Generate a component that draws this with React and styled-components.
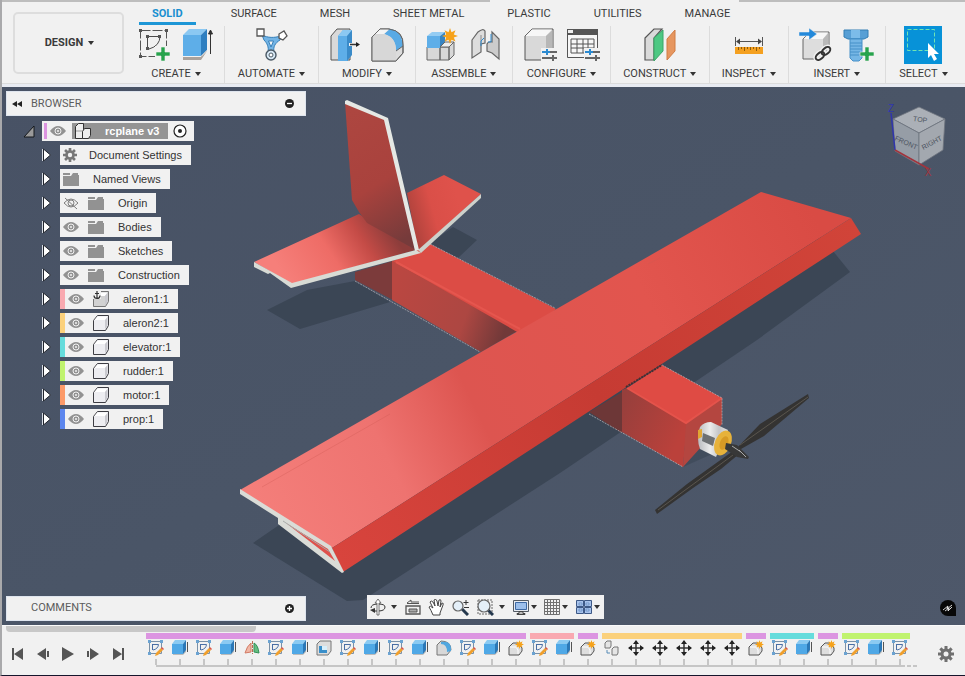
import React from "react";
import styled, { createGlobalStyle, css } from "styled-components";

const uiFont = `Roboto, "Liberation Sans", Arial, sans-serif`;
const treeFont = `"Liberation Sans", Arial, sans-serif`;

const GlobalStyle = createGlobalStyle`
  * { box-sizing: border-box; }
  html, body { margin: 0; background: #f1f1f1; }
  svg { display: block; flex: none; }
  button { margin: 0; padding: 0; border: 0; background: none; color: inherit; font: inherit; cursor: pointer; }
`;

/* ---------- Shell ---------- */

const Shell = styled.div`
  display: flex;
  flex-direction: column;
  min-height: 100vh;
  border-left: 2px solid #a9a9ab;
  border-bottom: 1px solid #15152c;
  background: #f1f1f1;
  color: #3a3a3a;
  font-family: ${uiFont};
  font-size: 11px;
  line-height: 14px;
`;

const DocumentStrip = styled.div`
  display: grid;
  grid-template-columns: 488fr 249fr 226fr;
  height: 2px;
  background: #bdbdbd;
`;

const ActiveDocument = styled.div`
  grid-column: 2;
  background: #f1f1f1;
`;

/* ---------- Toolbar ---------- */

const Toolbar = styled.header`
  display: flex;
  height: 85px;
  border-bottom: 3px solid #e8ebf2;
  box-shadow: inset 0 -1px 0 #dcdcdc;
`;

const WorkspaceButton = styled.button`
  display: flex;
  align-items: center;
  justify-content: center;
  gap: 5px;
  flex: none;
  width: 111px;
  height: 62px;
  margin: 10px 4px 0 11px;
  padding-left: 2px;
  border: 2px solid #dddddd;
  border-radius: 5px;
  font-weight: 700;
`;

const ToolArea = styled.div`
  display: flex;
  flex-direction: column;
  flex: 1;
  min-width: 0;
`;

const Tabs = styled.nav`
  display: flex;
  gap: 17px;
  height: 23px;
`;

const Tab = styled.button`
  height: 23px;
  padding: 0 13px;
  white-space: nowrap;
  ${(p) =>
    p.$active &&
    css`
      margin-left: 11px;
      margin-right: 5px;
      color: #1a8fd0;
      font-weight: 700;
      border-bottom: 3px solid #1d96d6;
      padding-top: 3px;
    `}
`;

const Groups = styled.div`
  display: flex;
  flex: 1;
  padding: 1px 4px 1px 0;
`;

const Group = styled.section`
  display: flex;
  flex-direction: column;
  align-items: center;
  justify-content: space-between;
  flex: ${(p) => p.$span} 1 0;
  border-right: 1px solid #dcdcdc;
  &:last-child { border-right: 0; }
`;

const GroupTools = styled.div`
  display: flex;
  align-items: center;
  justify-content: center;
  gap: 9px;
  height: 38px;
`;

const MenuButton = styled.button`
  display: flex;
  align-items: center;
  gap: 4px;
  height: 18px;
`;

const Caret = styled.span`
  border: 3px solid transparent;
  border-top: 4px solid #333333;
  border-bottom: 0;
`;

/* ---------- Viewport ---------- */

const Viewport = styled.main`
  position: relative;
  display: flex;
  flex-direction: column;
  flex: 1;
  overflow: hidden;
  background: #4b5567;
`;

const Scene = styled.svg`
  position: absolute;
  inset: 0;
  width: 100%;
  height: 100%;
`;

const Overlay = styled.div`
  position: relative;
  display: flex;
  flex: 1;
  justify-content: space-between;
  padding: 4px 14px 0 4px;
`;

const CubeHolder = styled.div`
  padding-top: 8px;
`;

const Panel = styled.div`
  display: flex;
  align-items: center;
  width: 300px;
  height: 25px;
  padding: 0 11px 0 4px;
  border: 1px solid #dfe5ee;
  background: #f1f1f1;
  color: #5c5c5c;
`;

const PanelTitle = styled.span`
  flex: 1;
  padding-left: ${(p) => (p.$indent ? 20 : 8)}px;
`;

const Tree = styled.ul`
  margin: 5px 0 0;
  padding: 0;
  list-style: none;
  font-family: ${treeFont};
`;

const TreeRow = styled.li`
  display: flex;
  align-items: center;
  height: 20px;
  margin-bottom: 4px;
  padding-left: ${(p) => (p.$root ? 16 : 36)}px;
  gap: ${(p) => (p.$root ? 7 : 9)}px;
`;

const Chip = styled.div`
  display: flex;
  align-items: center;
  gap: 9px;
  height: 20px;
  padding-right: ${(p) => (p.$root ? 7 : 9)}px;
  padding-left: ${(p) => (p.$color || p.$root ? 0 : 3)}px;
  background: #f1f1f1;
  color: #333333;
`;

const Stripe = styled.span`
  width: ${(p) => (p.$root ? 3 : 5)}px;
  height: ${(p) => (p.$root ? 16 : 20)}px;
  margin: 0 ${(p) => (p.$root ? -6 : -6)}px 0 ${(p) => (p.$root ? 2 : 0)}px;
  background: ${(p) => p.$color};
`;

const NodeName = styled.span`
  padding-left: ${(p) => (p.$tight ? 3 : 5)}px;
  white-space: nowrap;
`;

const RootName = styled.div`
  display: flex;
  align-items: center;
  gap: 14px;
  height: 16px;
  margin: 0 -4px 0 -3px;
  padding: 0 9px 0 3px;
  background: #949494;
  color: #ffffff;
  font-weight: 700;
`;

const Dock = styled.div`
  position: relative;
  display: flex;
  align-items: center;
  padding: 0 9px 4px 4px;
`;

const ViewTools = styled.div`
  display: flex;
  align-items: center;
  justify-content: space-between;
  width: 237px;
  height: 24px;
  margin: 0 auto 2px 61px;
  padding: 0 4px 0 3px;
  background: #f1f1f1;
`;

const ViewTool = styled.button`
  display: flex;
  align-items: center;
  gap: ${(p) => (p.$wide ? 5 : 2)}px;
`;

/* ---------- Timeline ---------- */

const Timeline = styled.footer`
  height: 50px;
  overflow: hidden;
  border-top: 1px solid #fafafa;
`;

const ScrollThumb = styled.div`
  width: 26%;
  height: 6px;
  margin-left: 4px;
  border-radius: 0 0 4px 4px;
  background: #c8c8c8;
`;

const TimelineBody = styled.div`
  display: flex;
  align-items: flex-start;
`;

const Playback = styled.div`
  display: flex;
  gap: 5px;
  flex: none;
  width: 144px;
  padding: 12px 0 0 6px;
`;

const FeatureGroups = styled.div`
  display: flex;
  gap: 4px;
`;

const FeatureGroup = styled.div`
  border-top: 6px solid ${(p) => p.$color};
  margin-top: 1px;
`;

const FeatureRow = styled.div`
  display: flex;
  gap: 4px;
  padding-top: 1px;
`;

const Feature = styled.button`
  display: flex;
  flex-direction: column;
  align-items: center;
  width: 20px;
  height: 25px;
  gap: 3px;
  &::after {
    content: "";
    width: 2px;
    height: 6px;
    background: #c6c6c6;
  }
`;

const Track = styled.div`
  height: 2px;
  margin: 0 ${(p) => (p.$last ? 5 : -4)}px 0 ${(p) => (p.$first ? 10 : 0)}px;
  background: #c6c6c6;
`;

const TrackEnd = styled.div`
  width: 10px;
  height: 2px;
  margin: 33px 0 0 -3px;
  background: repeating-linear-gradient(90deg, #c6c6c6 0 4px, transparent 4px 6px);
`;

const SettingsButton = styled.button`
  margin: 14px 11px 0 auto;
`;

/* ---------- Toolbar drawings ---------- */

const I = ({ children, w = 34, h = 36 }) => (
  <svg width={w} height={h} viewBox={`0 0 ${w} ${h}`} fill="none" aria-hidden="true">{children}</svg>
);

const Plus = ({ x, y }) => (
  <path transform={`translate(${x} ${y})`} d="M5 0h4v5h5v4h-5v5h-4v-5h-5v-4h5z" fill="#27a34c" stroke="#f1f1f1" strokeWidth=".6" />
);

const SketchIcon = () => (
  <I>
    <path d="M3.500 3.500h26v26h-26z" stroke="#555" strokeDasharray="10 2" />
    <path d="M10.500 9v12M10 9.500h13M23 9Q23 19 12 22" stroke="#4b4b4b" />
    <path d="M2 2h3v3H2zM28 2h3v3h-3zM2 28h3v3H2zM9 8h3v3H9zM21 8h3v3h-3zM9 20h3v3H9z" fill="#555" />
    <path d="M18 19h13v14H18z" fill="#f1f1f1" />
    <Plus x={19} y={20} />
  </I>
);

const ExtrudeIcon = () => (
  <I>
    <path d="M3 29l7-5h17l-6 9H3z" fill="#aaa29c" />
    <path d="M3 8h18v21H3z" fill="#5eaee8" />
    <path d="M3 8l6-6h18l-6 6z" fill="#8bc8f2" />
    <path d="M21 8l6-6v21l-6 6z" fill="#2f7fc0" />
    <path d="M3 29.500h18l6-6" stroke="#f2f2f2" />
    <path d="M30.500 5v22M28.500 7l2-4 2 4z" stroke="#333" fill="#222" />
  </I>
);

const AutomateIcon = () => (
  <I>
    <path d="M8 8c6 3 12 3 19 1l-1 4c-5 3-7 7-6 12h-6c1-5-1-9-4-12z" fill="#73b4e5" stroke="#347fb9" />
    <path d="M14.500 14h5L17 20z" fill="#f5f5f5" stroke="#347fb9" />
    <path d="M3 2h7v7H3zM25 7l5-3 3 5-4 4-4-2z" fill="#fff" stroke="#555" strokeWidth="1.300" />
    <circle cx="17" cy="28" r="5" fill="#d8e9f6" stroke="#4b5965" strokeWidth="1.400" />
    <circle cx="17" cy="28" r="2" fill="#fff" stroke="#4b5965" />
  </I>
);

const PressPullIcon = () => (
  <I>
    <path d="M3 9l6-7h13v31H3z" fill="#d9d9d9" stroke="#555" />
    <path d="M10 9l5-6h9l-4 6v25H10z" fill="#5eaee8" />
    <path d="M10 9l5-6h9l-4 6z" fill="#8bc8f2" />
    <path d="M19 9l5-6v25l-5 6z" fill="#3a8bc9" />
    <path d="M21 17.500h8" stroke="#f1f1f1" strokeWidth="3" />
    <path d="M22 17.500h8" stroke="#333" strokeWidth="1.500" />
    <path d="M28 15l4 2.500-4 2.500z" fill="#222" />
  </I>
);

const FilletIcon = () => (
  <I>
    <path d="M1 10l8-8h9q15 2 14 17v7l-7 8H1z" fill="#dcdcdc" stroke="#5b5b5b" />
    <path d="M13 7l6-5q12 2 13 17l-7 5Q25 10 13 7z" fill="#59aae5" />
    <path d="M1 10l3-3h9q12 3 12 17v10H1z" fill="#d7d7d7" />
    <path d="M1 10l8-8h9l-5 5H4z" fill="#f4f4f4" />
    <path d="M1 10l8-8h9q15 2 14 17v7l-7 8H1zM25 24l7-5" stroke="#666" />
  </I>
);

const Star = ({ x, y, s = 1 }) => (
  <path transform={`translate(${x} ${y}) scale(${s})`} d="M8 0l1.500 4.300 4-2-1.700 4.100L16 8l-4.200 1.600 1.700 4-4-1.900L8 16l-1.500-4.300-4 1.900 1.700-4L0 8l4.200-1.600-1.700-4.100 4 2z" fill="#f6a21a" />
);

const NewComponentIcon = () => (
  <I>
    <path d="M2 20h13v13H2zM15 20h9v13h-9zM24 20l5-5v13l-5 5z" fill="#d8d8d8" stroke="#666" />
    <path d="M2 9h13v12H2z" fill="#5eaee8" />
    <path d="M2 9l5-4h13l-5 4z" fill="#94ccf3" />
    <path d="M15 9l5-4v11l-5 5z" fill="#3785c3" />
    <path d="M15 20l5-5h9l-5 5z" fill="#eee" stroke="#666" />
    <Star x={17} y={1} />
  </I>
);

const JointIcon = () => (
  <I>
    <path d="M4 13l6-8q5-4 7-1v12l-4 1v8l-9 6z" fill="#ddd" stroke="#666" strokeWidth="1.200" />
    <path d="M13 8v10" stroke="#888" />
    <path d="M19 17q1-3 5-2V5l7 7v20l-7-6-5-2z" fill="#ccc" stroke="#666" strokeWidth="1.200" />
    <path d="M16 11l-3 3v5M23 7v8h-3" stroke="#2c8ad0" />
  </I>
);

const Sliders = ({ x, y }) => (
  <g transform={`translate(${x} ${y})`}>
    <path d="M-1-2h17v13H-1z" fill="#f1f1f1" />
    <path d="M0 2h15M0 8h15" stroke="#666" strokeWidth="2" />
    <path d="M5-1v6M0 2h8" stroke="#2c8ad0" strokeWidth="2" />
    <path d="M11 5v6" stroke="#666" strokeWidth="2" />
  </g>
);

const ConfigureBoxIcon = () => (
  <I>
    <path d="M2 9l7-7h21v24l-7 7H2z" fill="#d9d9d9" stroke="#555" />
    <path d="M2.500 9l6.500-6.500h20L23 9z" fill="#f7f7f7" />
    <path d="M23 9l6.500-6v23L23 33z" fill="#b7b7b7" />
    <Sliders x={19} y={23} />
  </I>
);

const ConfigureTableIcon = () => (
  <I>
    <path d="M1.500 2.500h30v28h-30z" fill="#f7f7f7" stroke="#555" />
    <path d="M1 2h31v6H1z" fill="#555" />
    <path d="M2 3h5v3H2z" fill="#eee" />
    <path d="M5 12h23v14H5zM5 17h23M5 21h23M11 12v14M17 12v14M22 12v14" stroke="#555" />
    <Sliders x={19} y={23} />
  </I>
);

const ConstructIcon = () => (
  <I>
    <path d="M2 11l9-9h8l-8 9v22H2z" fill="#dadada" stroke="#555" strokeWidth="1.200" />
    <path d="M11 11l9-8v21l-9 10z" fill="#4ec883" stroke="#39a767" />
    <path d="M24 12l8-9v21l-8 9z" fill="#e6965f" stroke="#d17c43" />
  </I>
);

const InspectIcon = () => (
  <I>
    <path d="M3.500 10v9M30.500 10v9M5 14.500h24" stroke="#555" />
    <path d="M4 14.500l4-3v6zM30 14.500l-4-3v6z" fill="#444" />
    <path d="M3 20h28v7H3z" fill="#f4a020" />
    <path d="M6.500 20v3M9.500 20v2M12.500 20v4M15.500 20v2M18.500 20v3M21.500 20v2M24.500 20v4M27.500 20v2" stroke="#8f5b0a" />
  </I>
);

const InsertIcon = () => (
  <I>
    <path d="M5 12l7-7h19v20l-6 7H5z" fill="#ddd" stroke="#666" />
    <path d="M5.500 12l7-6.500H30L25 12z" fill="#f7f7f7" />
    <path d="M25 12l5.500-6v18L25 32z" fill="#b9b9b9" />
    <path d="M1 5h10V1l8 6-8 6V9H1z" fill="#2489da" stroke="#f1f1f1" strokeWidth=".5" />
    <g stroke="#f1f1f1" strokeWidth="5"><ellipse cx="22" cy="29" rx="5" ry="3" transform="rotate(-40 22 29)" /><ellipse cx="28" cy="24" rx="5" ry="3" transform="rotate(-40 28 24)" /></g>
    <g stroke="#333" strokeWidth="2"><ellipse cx="22" cy="29" rx="5" ry="3" transform="rotate(-40 22 29)" /><ellipse cx="28" cy="24" rx="5" ry="3" transform="rotate(-40 28 24)" /></g>
  </I>
);

const BoltIcon = () => (
  <I>
    <path d="M3 3h24v7l-4 2H7l-4-2z" fill="#579fd5" stroke="#347eb4" />
    <path d="M10 3h9v8h-9z" fill="#7cbce9" />
    <path d="M9 12h12v19l-3 3h-6l-3-3z" fill="#75b6e5" stroke="#4790c8" />
    <path d="M9 16h12M9 19h12M9 22h12M9 25h12M9 28h12" stroke="#4790c8" />
    <Plus x={19} y={20} />
  </I>
);

const SelectIcon = () => (
  <I w={38} h={38}>
    <path d="M0 0h38v38H0z" fill="#0792d8" />
    <path d="M3.500 3.500h27v21h-27z" stroke="#70e5b2" strokeDasharray="4 2" />
    <path d="M24 17v15l3-3 3 6 3-2-3-5h5z" fill="#fff" />
  </I>
);

/* ---------- Browser drawings ---------- */

const EyeIcon = ({ off }) => (
  <I w={16} h={16}>
    {off ? (
      <g stroke="#7e7e7e"><path d="M1 8q7-8 14 0-7 8-14 0z" /><circle cx="8" cy="8" r="3" /><path d="M2 3l12 11" /></g>
    ) : (
      <g><path d="M0 8q8-10 16 0-8 10-16 0z" fill="#929292" /><circle cx="8" cy="8" r="3" stroke="#f1f1f1" /><circle cx="8" cy="8" r="1" fill="#f1f1f1" /></g>
    )}
  </I>
);

const FolderIcon = () => (
  <I w={16} h={14}><path d="M0 4h8l2-3h5v2h1v11H0zM0 1h7v2H0z" fill="#929292" /></I>
);

const GearIcon = ({ size = 14, color = "#777" }) => (
  <svg width={size} height={size} viewBox="0 0 16 16" aria-hidden="true">
    <g fill={color}>
      <path d="M6.500 0h3v16h-3zM0 6.500h16v3H0z" />
      <path d="M6.500 0h3v16h-3zM0 6.500h16v3H0z" transform="rotate(45 8 8)" />
      <path d="M8 2.500a5.500 5.500 0 100 11 5.500 5.500 0 000-11z" />
    </g>
    <circle cx="8" cy="8" r="2.500" fill="#f1f1f1" />
  </svg>
);

const CubeIcon = ({ anchor }) => (
  <I w={16} h={16}>
    <path d="M.500 5.500l4-5h11v10l-3 5H.500z" fill={anchor ? "#d2d2d2" : "#ededf1"} stroke={anchor ? "#777" : "#3d3d43"} strokeLinejoin="round" />
    <path d="M1.500 5l3-3.500h10L12 5z" fill="#fff" />
    <path d="M12 5l2.500-3v8.500L12 14z" fill="#c9c9cf" />
    {anchor && <g><path d="M0 0h8v8H0z" fill="#f1f1f1" /><path d="M4 0v7M2 2.500h4M1 4.500q0 3 3 3t3-3" stroke="#333" strokeWidth="1.200" /></g>}
  </I>
);

const AssemblyIcon = () => (
  <I w={16} h={16}>
    <path d="M.500 3.500l3-3h5v6l-1 9h-7z" fill="#eee" stroke="#333" />
    <path d="M7.500 8.500l2-3h6v7l-2 3h-6z" fill="#eee" stroke="#333" />
    <path d="M1 8h6" stroke="#999" />
  </I>
);

const Expander = () => (
  <I w={9} h={14}><path d="M.500 1v12" stroke="#d5dae2" /><path d="M1.500 1l7 6-7 6z" fill="#fff" stroke="#22262e" /></I>
);

const RootExpander = () => (
  <I w={13} h={13}><path d="M12 1v11H2z" fill="#9a9a9a" stroke="#15181c" /></I>
);

const BadgeIcon = ({ plus }) => (
  <I w={9} h={9}><circle cx="4.500" cy="4.500" r="4.500" fill="#222" /><path d={plus ? "M2 4.500h5M4.500 2v5" : "M2 4.500h5"} stroke="#fff" strokeWidth="1.300" /></I>
);

const TargetIcon = () => (
  <I w={14} h={14}><circle cx="7" cy="7" r="6" fill="#fff" stroke="#222" strokeWidth="1.200" /><circle cx="7" cy="7" r="2" fill="#222" /></I>
);

const CollapseIcon = () => (
  <I w={12} h={8}><path d="M6 1v6L1 4zM11 1v6L6 4z" fill="#222" /></I>
);

/* ---------- View cube and model ---------- */

const ViewCube = () => (
  <svg width="66" height="84" viewBox="0 0 66 84" aria-label="View cube">
    <g stroke="#6d747e" strokeWidth=".8">
      <path d="M8 20L34 8 60 20 34 34z" fill="#abb0b7" />
      <path d="M8 20L34 34V66L10 52z" fill="#969da6" />
      <path d="M34 34L60 20 58 51 34 66z" fill="#a3a8af" />
    </g>
    <path d="M6 14L10 51" stroke="#3035ae" strokeWidth="1.500" />
    <path d="M10 51L44 70" stroke="#a1343d" strokeWidth="1.500" />
    <g fontFamily="Liberation Sans, sans-serif" fontSize="7" textAnchor="middle" fill="#4c535e">
      <text x="35" y="23" transform="rotate(8 35 22)">TOP</text>
      <text x="21" y="46" transform="rotate(24 21 44)">FRONT</text>
      <text x="47" y="46" transform="rotate(-28 47 44)">RIGHT</text>
      <text x="6" y="13" fontSize="10" fill="#3035ae">Z</text>
      <text x="43" y="77" fontSize="10" fill="#a1343d">X</text>
    </g>
  </svg>
);

const Model = () => (
  <Scene viewBox="2 87 963 538" preserveAspectRatio="xMidYMid slice" role="img" aria-label="RC plane model">
    <defs>
      <linearGradient id="ground" x1="0" y1="0" x2="1" y2="1"><stop offset="0" stopColor="#485265" /><stop offset=".5" stopColor="#4a5567" /><stop offset="1" stopColor="#4e586a" /></linearGradient>
      <linearGradient id="wing" gradientUnits="userSpaceOnUse" x1="245" y1="480" x2="810" y2="205"><stop offset="0" stopColor="#f47e7a" /><stop offset=".22" stopColor="#ee7370" /><stop offset=".38" stopColor="#dd5550" /><stop offset=".7" stopColor="#e2554e" /><stop offset="1" stopColor="#d94b44" /></linearGradient>
      <linearGradient id="edge" gradientUnits="userSpaceOnUse" x1="335" y1="555" x2="855" y2="225"><stop offset="0" stopColor="#d8443d" /><stop offset=".5" stopColor="#c63b33" /><stop offset="1" stopColor="#d14439" /></linearGradient>
      <linearGradient id="fin" x1=".3" y1="0" x2=".6" y2="1"><stop offset="0" stopColor="#ad4640" /><stop offset=".55" stopColor="#a9423d" /><stop offset="1" stopColor="#763b3b" /></linearGradient>
      <linearGradient id="tailLeft" gradientUnits="userSpaceOnUse" x1="290" y1="285" x2="385" y2="222"><stop offset="0" stopColor="#f67f7a" /><stop offset=".45" stopColor="#ee6c66" /><stop offset=".75" stopColor="#c44b46" /><stop offset="1" stopColor="#8d3d3b" /></linearGradient>
      <linearGradient id="tailRight" gradientUnits="userSpaceOnUse" x1="407" y1="220" x2="460" y2="205"><stop offset="0" stopColor="#a9413b" /><stop offset=".5" stopColor="#da4f48" /><stop offset="1" stopColor="#df524b" /></linearGradient>
      <linearGradient id="rearSide" gradientUnits="userSpaceOnUse" x1="393" y1="290" x2="505" y2="330"><stop offset="0" stopColor="#ba4741" /><stop offset=".65" stopColor="#ad4742" /><stop offset="1" stopColor="#713939" /></linearGradient>
      <linearGradient id="frontSide" gradientUnits="userSpaceOnUse" x1="622" y1="400" x2="684" y2="430"><stop offset="0" stopColor="#973f3c" /><stop offset="1" stopColor="#bb413b" /></linearGradient>
      <linearGradient id="metal" x1="0" y1="0" x2="1" y2="0"><stop offset="0" stopColor="#b9bbbf" /><stop offset=".4" stopColor="#ececec" /><stop offset=".7" stopColor="#c4c5c8" /><stop offset="1" stopColor="#e0e0e0" /></linearGradient>
    </defs>
    <path d="M0 80h970v550H0z" fill="url(#ground)" />
    <g fill="#3b4655">
      <path d="M253 543L330 490 820 235 850 272 757 340 560 473 363 600 347 601z" />
      <path d="M267 310l40-20 48-9 35 21-90 27zM430 243l23-16 24 13-19 18z" />
      <path d="M683 467l20-35 18 18z" opacity=".6" />
    </g>
    <path d="M355 272v8l38 20V261z" fill="#7c3b3b" />
    <path d="M392 260v40l89 52 38-22L396 261z" fill="url(#rearSide)" />
    <path d="M393 261l37-17 126 65-30 28z" fill="#dc4c45" />
    <path d="M396 262l124 67" stroke="#e5564e" strokeWidth="2" />
    <path d="M355 281l125 71M430 244l125 64" stroke="#b9b2b6" strokeDasharray="2 1" strokeWidth=".7" fill="none" />
    <path d="M407 193l37-18 37 19-63 57z" fill="url(#tailRight)" />
    <path d="M481 194v4l-60 55-3-3z" fill="#cdd1cb" />
    <path d="M254 262l105-48 57 36-124 34z" fill="url(#tailLeft)" />
    <path d="M254 262v5l14 7 2-1 21 15 130-35-5-3-124 33z" fill="#d8dbd5" />
    <path d="M345 102l41 17 30 131-49-27-8-11-7-12z" fill="url(#fin)" />
    <path d="M345 101l2-1 41 18 31 132-4 1-31-131-39-16z" fill="#e5e8e4" />
    <path d="M589 412l33-20v41z" fill="#6d3737" />
    <path d="M622 390l5-2 60 35-4 44-61-35z" fill="url(#frontSide)" />
    <path d="M627 388l35-23 60 33-36 25z" fill="#df4b44" />
    <path d="M722 398v26l-39 43 3-44z" fill="#b44640" />
    <path d="M627 388l59 35 36-25" stroke="#e5534b" strokeWidth="2" fill="none" />
    <path d="M662 365l60 33v27M589 414l94 53" stroke="#c1b9bb" strokeDasharray="2 1" strokeWidth=".7" fill="none" />
    <path d="M240 490L761 192l90 26-519 330z" fill="url(#wing)" />
    <path d="M332 548L851 218l10 16-518 338z" fill="url(#edge)" />
    <path d="M240 489l91 57 13 26-2 1-64-49v-6l-38-24z" fill="#dadcd7" />
    <path d="M286 523l42 26 7 12z" fill="#df514c" />
    <path d="M283 521l47 31" stroke="#a8acaa" />
    <path d="M626 387l36-22" stroke="#472e31" strokeWidth="2" strokeDasharray="2 1" />
    <path d="M262 487L390 414M648 264l12-6" stroke="#cd5853" opacity=".35" fill="none" />
    <path d="M655 510l32-26 46-33 6 3-18 15-28 19-36 26zM736 449l24-25 48-30 1 4-45 38-23 13z" fill="#343332" />
    <path d="M808 397l-68 48M733 455l-75 55" stroke="#5a564e" fill="none" />
    <path d="M700 427q4-5 11-5l17 8-12 27-16-8q-4-11 0-22z" fill="url(#metal)" />
    <path d="M698 430l4-1v8l-4 2z" fill="#e1a633" />
    <path d="M703 433l12 5-2 8-11-5z" fill="#6d7073" />
    <ellipse cx="723" cy="443" rx="8" ry="13" fill="#e7b23b" transform="rotate(23 723 443)" />
    <ellipse cx="724" cy="443" rx="4" ry="7" fill="#d79a25" transform="rotate(23 724 443)" />
    <path d="M726 443l11 2 12 12-1 2-11-2-12-8z" fill="#383838" />
    <path d="M732 446l9 6M739 450l7 7" stroke="#aaa" />
  </Scene>
);

/* ---------- View tools ---------- */

const OrbitIcon = () => (
  <I w={16} h={18}><path d="M1 10q0-4 7-4t7 3q0 4-7 4H4" stroke="#333" /><path d="M0 12l5-2v5z" fill="#333" /><path d="M7 5H5l3-4 3 4H9v12H7z" fill="#fff" stroke="#555" strokeWidth=".8" /></I>
);
const LookIcon = () => (
  <I w={16} h={16}><path d="M1 7h14v8H1z" stroke="#555" strokeWidth="1.300" /><path d="M4 10h8v3H4z" fill="#aaa" stroke="#555" /><path d="M2 4.500h12M2 4l4-3v2h8" stroke="#555" /></I>
);
const HandIcon = () => (
  <I w={16} h={17}><path d="M5 16Q3 11 1 8q1-2 4 1L2 3q1-2 3 0l2 4L6 1q2-2 3 1l1 5 1-6q2-1 2 1l-1 6 2-4q2 0 1 2l-3 8v2z" fill="#fff" stroke="#444" strokeLinejoin="round" /></I>
);
const ZoomIcon = ({ box }) => (
  <I w={17} h={17}>
    {box && <path d="M1 1h14v14H1z" stroke="#666" strokeDasharray="2 1" />}
    <path d="M10 10l6 6" stroke="#25384d" strokeWidth="3" />
    <circle cx={box ? 7 : 6} cy="7" r={box ? 6 : 5} fill="#e4eff8" stroke="#666" strokeWidth="1.200" />
    {!box && <path d="M14 1v5M11.500 3.500h5M12 8.500h5" stroke="#333" />}
  </I>
);
const DisplayIcon = () => (
  <I w={16} h={16}><path d="M.500 1.500h15v11H.500z" fill="#e7ebf1" stroke="#545b64" /><path d="M2.500 3.500h11v7h-11z" fill="#9cbfeb" stroke="#3d69a4" /><path d="M6 12.500h4v2h2v1H4v-1h2z" fill="#bbb" stroke="#444" /></I>
);
const GridIcon = () => (
  <I w={16} h={16}><path d="M.500.500h15v15H.500zM.500 3.500h15M.500 6.500h15M.500 9.500h15M.500 12.500h15M3.500.500v15M6.500.500v15M9.500.500v15M12.500.500v15" stroke="#707070" /></I>
);
const LayoutIcon = () => (
  <I w={16} h={14}><path d="M.500.500h7v6h-7zM8.500.500h7v6h-7zM.500 7.500h7v6h-7zM8.500 7.500h7v6h-7z" fill="#a9c4ec" stroke="#3d5987" /><path d="M3 3h3v2H3zM10 3h3v2h-3zM3 9h3v2H3zM10 9h3v2h-3z" fill="#b8d0f1" stroke="#527cb9" strokeWidth=".6" /></I>
);
const LogoIcon = () => (
  <I w={16} h={16}><path d="M8 0a8 8 0 018 8v8H8A8 8 0 018 0z" fill="#080808" /><path d="M3 10l5-4-1 3 5-4M5 11l4-3-1 3 4-4" stroke="#eee" strokeWidth=".9" /></I>
);

/* ---------- Timeline drawings ---------- */

const featureArt = {
  sketch: (
    <g><path d="M1.500 1.500h12v12h-12z" stroke="#7a91a8" /><path d="M4.500 4v6M4.500 4.500h6Q10 9 5 10" stroke="#4a6fa5" /><path d="M0 0h3v3H0zM12 0h3v3h-3zM0 12h3v3H0z" fill="#6ba3d2" /><path d="M8 13l5-5 2 2-5 5-3 1z" fill="#f0a02d" /><path d="M13 8l1-1 2 2-1 1z" fill="#dd5547" /></g>
  ),
  extrude: (
    <g><path d="M1 13v2h10l3-3v-2z" fill="#bbb" /><path d="M0 4h11v10H0z" fill="#4fa8e6" /><path d="M0 4l3-4h11l-3 4z" fill="#8bcaf2" /><path d="M11 4l3-4v10l-3 4z" fill="#2b78b7" /><path d="M15.500 2v10" stroke="#555" /></g>
  ),
  loft: (
    <g><path d="M1 13Q3 6 7 3v9z" fill="#f0b7a6" stroke="#d27b65" /><path d="M10 3q4 2 5 10l-5-1z" fill="#65bd80" stroke="#349158" /><path d="M8.500 1v13" stroke="#ba6b4f" strokeDasharray="3 1" /></g>
  ),
  shell: (
    <g><path d="M1 4l3-3h11v10l-3 4H1z" fill="#ddd" stroke="#777" /><path d="M3 6h8v7H3z" fill="#398fca" /><path d="M6 6h5v4H6z" fill="#d8effb" /></g>
  ),
  fillet: (
    <g><path d="M1 5l4-4q10 0 10 9l-4 5H1z" fill="#d8d8d8" stroke="#777" /><path d="M5 2q11-2 10 9l-4 1Q11 4 5 4z" fill="#51a7df" /></g>
  ),
  component: (
    <g><path d="M1 7l4-4h5l4 5v3l-3 4H1z" fill="#dedede" stroke="#555" /><path d="M2 7h6l2 3v4" stroke="#fff" /><Star x={7} y={0} s={0.56} /></g>
  ),
  pattern: (
    <g fill="#e5e5e5" stroke="#777"><path d="M1 3l2-2h4v5L6 8H1zM8 9l2-2h4v6l-1 2H8z" /><path d="M3 10v3h3" stroke="#568bb6" fill="none" /></g>
  ),
  move: (
    <g><path d="M8 1v14M1 8h14" stroke="#333" strokeWidth="1.500" /><path d="M8 0l3 4H5zM8 16l3-4H5zM0 8l4-3v6zM16 8l-4-3v6z" fill="#222" /></g>
  ),
};

const playbackShapes = [
  ["Go to start", "M4 4h2v12H4zM15 4v12L6 10z"],
  ["Step back", "M13 4v12L4 10zM14 7h2v6h-2z"],
  ["Play", "M4 3l12 7-12 7z"],
  ["Step forward", "M7 4v12l9-6zM4 7h2v6H4z"],
  ["Go to end", "M5 4v12l9-6zM14 4h2v12h-2z"],
];

/* ---------- Data ---------- */

const tabs = ["SOLID", "SURFACE", "MESH", "SHEET METAL", "PLASTIC", "UTILITIES", "MANAGE"];

const groups = [
  { name: "CREATE", span: 97, tools: [SketchIcon, ExtrudeIcon] },
  { name: "AUTOMATE", span: 94, tools: [AutomateIcon] },
  { name: "MODIFY", span: 97, tools: [PressPullIcon, FilletIcon] },
  { name: "ASSEMBLE", span: 97, tools: [NewComponentIcon, JointIcon] },
  { name: "CONFIGURE", span: 98, tools: [ConfigureBoxIcon, ConfigureTableIcon] },
  { name: "CONSTRUCT", span: 99, tools: [ConstructIcon] },
  { name: "INSPECT", span: 79, tools: [InspectIcon] },
  { name: "INSERT", span: 97, tools: [InsertIcon, BoltIcon] },
  { name: "SELECT", span: 76, tools: [SelectIcon] },
];

const nodes = [
  { name: "Document Settings", kind: "settings" },
  { name: "Named Views", kind: "views" },
  { name: "Origin", kind: "folder", hidden: true },
  { name: "Bodies", kind: "folder" },
  { name: "Sketches", kind: "folder" },
  { name: "Construction", kind: "folder" },
  { name: "aleron1:1", kind: "part", color: "#f9a9b0", anchor: true },
  { name: "aleron2:1", kind: "part", color: "#fbd17c" },
  { name: "elevator:1", kind: "part", color: "#65dcdc" },
  { name: "rudder:1", kind: "part", color: "#c0f36e" },
  { name: "motor:1", kind: "part", color: "#fc9a68" },
  { name: "prop:1", kind: "part", color: "#5c86ee" },
];

const viewTools = [
  { name: "Orbit", Icon: OrbitIcon, menu: true, wide: true },
  { name: "Look at", Icon: LookIcon },
  { name: "Pan", Icon: HandIcon },
  { name: "Zoom", Icon: ZoomIcon },
  { name: "Fit", Icon: () => <ZoomIcon box />, menu: true, wide: true },
  { name: "Display settings", Icon: DisplayIcon, menu: true },
  { name: "Grid and snaps", Icon: GridIcon, menu: true },
  { name: "Viewports", Icon: LayoutIcon, menu: true },
];

const S = "sketch", E = "extrude", C = "component", M = "move";
const history = [
  { color: "#dc95e1", items: [S, E, S, E, "loft", S, E, "shell", S, E, S, E, "fillet", S, E, C] },
  { color: "#f9a9b0", items: [S, E] },
  { color: "#dc95e1", items: [C] },
  { color: "#fbd17c", items: ["pattern", M, M, M, M, M] },
  { color: "#dc95e1", items: [C] },
  { color: "#65dcdc", items: [S, E] },
  { color: "#dc95e1", items: [C] },
  { color: "#c0f36e", items: [S, E, S] },
];

const TreeNode = ({ node }) => (
  <TreeRow>
    <button aria-label={`Expand ${node.name}`}><Expander /></button>
    <Chip $color={node.color}>
      {node.color && <Stripe $color={node.color} />}
      {(node.kind === "folder" || node.kind === "part") && (
        <button aria-label={`Toggle ${node.name}`}><EyeIcon off={node.hidden} /></button>
      )}
      {node.kind === "settings" && <GearIcon />}
      {(node.kind === "folder" || node.kind === "views") && <FolderIcon />}
      {node.kind === "part" && <CubeIcon anchor={node.anchor} />}
      <NodeName $tight={node.kind === "settings"}>{node.name}</NodeName>
    </Chip>
  </TreeRow>
);

export default function App() {
  return (
    <Shell>
      <GlobalStyle />
      <DocumentStrip><ActiveDocument /></DocumentStrip>
      <Toolbar>
        <WorkspaceButton>DESIGN <Caret /></WorkspaceButton>
        <ToolArea>
          <Tabs>
            {tabs.map((t, i) => <Tab key={t} $active={i === 0}>{t}</Tab>)}
          </Tabs>
          <Groups>
            {groups.map((g) => (
              <Group key={g.name} $span={g.span}>
                <GroupTools>
                  {g.tools.map((Tool, i) => <button key={i} aria-label={`${g.name} tool ${i + 1}`}><Tool /></button>)}
                </GroupTools>
                <MenuButton>{g.name}<Caret /></MenuButton>
              </Group>
            ))}
          </Groups>
        </ToolArea>
      </Toolbar>

      <Viewport>
        <Model />
        <Overlay>
          <div>
            <Panel>
              <button aria-label="Collapse browser"><CollapseIcon /></button>
              <PanelTitle>BROWSER</PanelTitle>
              <button aria-label="Minimize browser"><BadgeIcon /></button>
            </Panel>
            <Tree>
              <TreeRow $root>
                <button aria-label="Collapse rcplane v3"><RootExpander /></button>
                <Chip $root>
                  <Stripe $root $color="#dc95e1" />
                  <button aria-label="Toggle rcplane v3"><EyeIcon /></button>
                  <RootName><AssemblyIcon />rcplane v3</RootName>
                  <button aria-label="Activate rcplane v3"><TargetIcon /></button>
                </Chip>
              </TreeRow>
              {nodes.map((n) => <TreeNode key={n.name} node={n} />)}
            </Tree>
          </div>
          <CubeHolder><ViewCube /></CubeHolder>
        </Overlay>
        <Dock>
          <Panel>
            <PanelTitle $indent>COMMENTS</PanelTitle>
            <button aria-label="Open comments"><BadgeIcon plus /></button>
          </Panel>
          <ViewTools>
            {viewTools.map(({ name, Icon, menu, wide }) => (
              <ViewTool key={name} aria-label={name} $wide={wide}><Icon />{menu && <Caret />}</ViewTool>
            ))}
          </ViewTools>
          <button aria-label="Assistant"><LogoIcon /></button>
        </Dock>
      </Viewport>

      <Timeline>
        <ScrollThumb />
        <TimelineBody>
          <Playback>
            {playbackShapes.map(([name, d]) => (
              <button key={name} aria-label={name}><I w={20} h={20}><path d={d} fill="#555" /></I></button>
            ))}
          </Playback>
          <FeatureGroups>
            {history.map((g, gi) => (
              <FeatureGroup key={gi} $color={g.color}>
                <FeatureRow>
                  {g.items.map((kind, i) => (
                    <Feature key={i} aria-label={kind}><I w={16} h={16}>{featureArt[kind]}</I></Feature>
                  ))}
                </FeatureRow>
                <Track $first={gi === 0} $last={gi === history.length - 1} />
              </FeatureGroup>
            ))}
          </FeatureGroups>
          <TrackEnd />
          <SettingsButton aria-label="Timeline settings"><GearIcon size={16} color="#707070" /></SettingsButton>
        </TimelineBody>
      </Timeline>
    </Shell>
  );
}
